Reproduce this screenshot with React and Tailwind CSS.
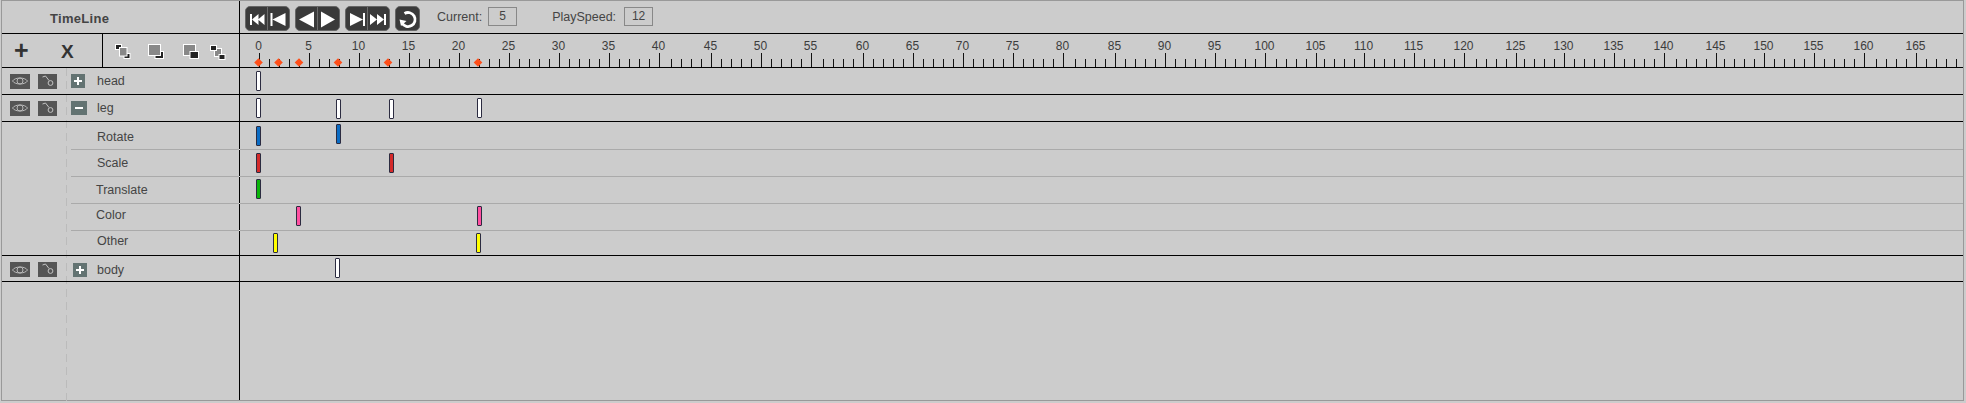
import React from 'react';

const MAJORS = {
  0: 259, 5: 309, 10: 359, 15: 409, 20: 459, 25: 509, 30: 559, 35: 609, 40: 659, 45: 711, 50: 761, 55: 811,
  60: 863, 65: 913, 70: 963, 75: 1013, 80: 1063, 85: 1115, 90: 1165, 95: 1215, 100: 1265, 105: 1316, 110: 1364,
  115: 1414, 120: 1464, 125: 1516, 130: 1564, 135: 1614, 140: 1664, 145: 1716, 150: 1764, 155: 1814, 160: 1864, 165: 1916,
};
const DIAMONDS = [258.5, 278.5, 299, 338, 388, 478];

const KEY_COLORS = {
  white: 'bg-white',
  blue: 'bg-[#0a6cc4]',
  red: 'bg-[#d42a2a]',
  green: 'bg-[#0ab50a]',
  pink: 'bg-[#ff4fa0]',
  yellow: 'bg-[#ffff00]',
};

const Ruler = () => {
  const majors = Object.keys(MAJORS).map(Number);
  const minors = [];
  majors.forEach((n) => {
    const x = MAJORS[n];
    if (n > 0) [10, 20, 30, 40].forEach((d) => minors.push(x - d));
  });
  [10, 20, 30, 40].forEach((d) => minors.push(1916 + d));
  return (
    <svg width="1723" height="33" viewBox="240 34 1723 33" className="block">
      {minors.map((x) => <line key={x} x1={x + 0.5} x2={x + 0.5} y1="59" y2="67" stroke="#111" />)}
      {majors.map((n) => (
        <g key={n}>
          <line x1={MAJORS[n] + 0.5} x2={MAJORS[n] + 0.5} y1="53" y2="67" stroke="#111" />
          <text x={MAJORS[n] - 0.5} y="50" textAnchor="middle" fontSize="12" fill="#3c3c3c">{n}</text>
        </g>
      ))}
      {DIAMONDS.map((x) => (
        <polygon key={x} points={`${x},58.2 ${x + 4.3},62.5 ${x},66.8 ${x - 4.3},62.5`} fill="#ff4f1a" />
      ))}
    </svg>
  );
};

const Keyframe = ({ x, y, color }) => (
  <div
    className={`absolute w-[5px] h-[20px] rounded-[1px] border border-[#2b2b40] ${KEY_COLORS[color]}`}
    style={{ left: x - 240, top: y }}
  />
);

const EyeIcon = () => (
  <div className="w-[20px] h-[15px] bg-[#555] flex items-center justify-center">
    <svg width="18" height="12" viewBox="0 0 18 12" fill="none" stroke="#b8b8b8" strokeWidth="1">
      <path d="M1.5 6 C4 2 14 2 16.5 6 C14 10 4 10 1.5 6 Z" />
      <circle cx="9" cy="6" r="3" />
    </svg>
  </div>
);

const KeyIcon = () => (
  <div className="w-[19px] h-[15px] bg-[#555] flex items-center justify-center">
    <svg width="19" height="15" viewBox="0 0 19 15" fill="none" stroke="#c4c4c4" strokeWidth="1">
      <path d="M4.5 3 L7.5 2 L11 6.5" />
      <circle cx="12.5" cy="9" r="2.4" />
    </svg>
  </div>
);

const Toggle = ({ minus, wide }) => (
  <div className={`h-[14px] bg-[#637372] flex items-center justify-center ${wide ? 'w-[16px]' : 'w-[14px]'}`}>
    <svg width="10" height="10" viewBox="0 0 10 10" fill="#fff">
      <rect x="1" y="4" width="8" height="2" />
      {!minus && <rect x="4" y="1" width="2" height="8" />}
    </svg>
  </div>
);

const Divider = () => <div className="w-px h-full bg-black shrink-0" />;

const ParentRow = ({ label, height, minus, wide, toggleGap, labelGap, keys, top = '', labelTop = '', border = 'border-b border-black' }) => (
  <div className={`flex ${height} ${border}`}>
    <div className={`w-[237px] pl-[8px] flex items-center shrink-0 ${top}`}>
      <EyeIcon />
      <div className="w-[8px]" />
      <KeyIcon />
      <div className={toggleGap} />
      <Toggle minus={minus} wide={wide} />
      <span className={`${labelGap} ${labelTop} text-[12.5px] leading-[15px] text-[#444]`}>{label}</span>
    </div>
    <Divider />
    <div className="relative flex-1">
      {keys.map((k) => <Keyframe key={k.x} {...k} />)}
    </div>
  </div>
);

const SubRow = ({ label, height, pad, indent, keys, black }) => {
  const line = black ? 'border-b border-black' : 'border-b border-[#aaa]';
  return (
    <div className={`flex ${height} ${black ? line : ''}`}>
      <div className="w-[237px] pl-[69px] shrink-0">
        <div className={`h-full ${black ? '' : line} ${pad} ${indent} text-[12.5px] leading-[15px] text-[#444]`}>{label}</div>
      </div>
      <div className={`w-px h-full bg-black shrink-0 ${black ? '' : 'border-b border-[#ddd]'}`} />
      <div className={`relative flex-1 ${black ? '' : line}`}>
        {keys.map((k) => <Keyframe key={k.x} {...k} />)}
      </div>
    </div>
  );
};

const Sep = () => <div className="w-px h-full bg-[#6a6a6a]" />;

const Ctrl = ({ children }) => (
  <svg width="20" height="22" viewBox="0 0 20 22" fill="#fff" className="block">{children}</svg>
);

const Group = ({ left, right }) => (
  <div className="flex h-[25px] w-[45px] rounded-[5px] bg-[#3a3a3a] border border-[#666] overflow-hidden">
    <div className="w-[22px] flex items-center justify-center">{left}</div>
    <Sep />
    <div className="w-[22px] flex items-center justify-center">{right}</div>
  </div>
);

const Toolbar = () => (
  <div className="flex items-center pl-[5px] pt-[5px] pb-[2px] h-full">
    <div className="flex gap-[5px]">
      <Group
        left={<Ctrl><path d="M3 6h2v11H3zM5 11.5l6.5-5.5v11zM11 11.5l6.5-5.5v11z" /></Ctrl>}
        right={<Ctrl><path d="M2.5 5h2v13h-2zM4.5 11.5L17.5 5v13z" /></Ctrl>}
      />
      <Group
        left={<Ctrl><path d="M2 11.5L17 3.5v16z" /></Ctrl>}
        right={<Ctrl><path d="M3 3.5L17 11.5L3 19.5z" /></Ctrl>}
      />
      <Group
        left={<Ctrl><path d="M3 5L16 11.5L3 18zM16 5h2v13h-2z" /></Ctrl>}
        right={<Ctrl><path d="M2 6l7 5.5l-7 5.5zM9 6l7 5.5l-7 5.5zM16 6h2v11h-2z" /></Ctrl>}
      />
      <div className="w-[25px] h-[25px] rounded-[5px] bg-[#3a3a3a] border border-[#666] flex items-center justify-center">
        <svg width="22" height="22" viewBox="0 0 22 22" fill="none" className="block">
          <path d="M7.5 5.5 A7 7 0 1 1 5 15" stroke="#fff" strokeWidth="2.8" />
          <path d="M2.5 11.5 L9.5 13 L4 18 Z" fill="#fff" />
        </svg>
      </div>
    </div>
    <div className="flex items-center ml-[17px] mb-[5px] text-[12.5px] text-[#444]">
      <span className="mt-[2px]">Current:</span>
      <div className="ml-[6px] w-[29px] h-[19px] border border-[#888] flex items-center justify-center text-[12px]">5</div>
      <span className="ml-[35px] mt-[2px]">PlaySpeed:</span>
      <div className="ml-[8px] w-[29px] h-[19px] border border-[#888] flex items-center justify-center text-[12px]">12</div>
    </div>
  </div>
);

const Stack = ({ children }) => (
  <svg width="18" height="18" viewBox="0 0 18 18" className="block" stroke="#fff" strokeWidth="1">{children}</svg>
);

const OrderIcons = () => (
  <div className="w-[134px] relative">
    <div className="absolute left-[11px] top-[9px]">
      <Stack>
        <rect x="1.5" y="1.5" width="6" height="5" fill="#222" />
        <rect x="10" y="10.5" width="6" height="5" fill="#222" />
        <rect x="5.5" y="4.5" width="7.5" height="8.5" fill="#888" />
      </Stack>
    </div>
    <div className="absolute left-[44px] top-[9px]">
      <Stack>
        <rect x="8" y="8.5" width="8.5" height="7" fill="#222" />
        <rect x="1.5" y="1.5" width="12" height="11" fill="#888" />
      </Stack>
    </div>
    <div className="absolute left-[79px] top-[9px]">
      <Stack>
        <rect x="1.5" y="1.5" width="12" height="11" fill="#888" />
        <rect x="8" y="8.5" width="8.5" height="7" fill="#222" />
      </Stack>
    </div>
    <div className="absolute left-[106px] top-[9px]">
      <Stack>
        <rect x="5.5" y="5.5" width="7" height="8" fill="#888" />
        <rect x="1.5" y="2.5" width="6" height="5" fill="#222" />
        <rect x="10" y="11.5" width="6" height="5" fill="#222" />
      </Stack>
    </div>
  </div>
);

export default function App() {
  return (
    <div className="w-full h-[403px] bg-[#ccc] overflow-hidden font-['Liberation_Sans',Arial,sans-serif]">
      <div className="relative h-[401px] ml-[1px] mr-[2px] border border-[#999]">
        <div className="absolute left-[64px] top-[67px] -bottom-[2px] w-px bg-[repeating-linear-gradient(to_bottom,#bbb_0,#bbb_8px,transparent_8px,transparent_13px)]" />

        <div className="relative flex h-[33px] border-b border-black">
          <div className="w-[237px] pl-[48px] pt-[3px] flex items-center shrink-0 text-[13px] font-bold tracking-[0.3px] text-[#444]">TimeLine</div>
          <Divider />
          <div className="flex-1"><Toolbar /></div>
        </div>

        <div className="relative flex h-[34px] border-b border-black">
          <div className="w-[100px] h-full flex items-center shrink-0 font-bold text-[#333]">
            <span className="w-[59px] pl-[12px] text-[25px] leading-none">+</span>
            <span className="text-[19px] leading-none mt-[2px]">X</span>
          </div>
          <Divider />
          <OrderIcons />
          <div className="w-[2px]" />
          <Divider />
          <div className="flex-1"><Ruler /></div>
        </div>

        <div className="relative">
          <ParentRow label="head" height="h-[27px]" toggleGap="w-[14px]" labelGap="ml-[12px]" keys={[{ x: 256, y: 3, color: 'white' }]} />
          <ParentRow
            label="leg" height="h-[27px]" minus wide toggleGap="w-[14px]" labelGap="ml-[10px]" labelTop="mt-[1px]"
            keys={[
              { x: 256, y: 3, color: 'white' }, { x: 336, y: 4, color: 'white' },
              { x: 389, y: 4, color: 'white' }, { x: 477, y: 3, color: 'white' },
            ]}
          />
          <SubRow label="Rotate" height="h-[28px]" pad="pt-[8px]" indent="pl-[26px]" keys={[{ x: 256, y: 4, color: 'blue' }, { x: 336, y: 2, color: 'blue' }]} />
          <SubRow label="Scale" height="h-[27px]" pad="pt-[6px]" indent="pl-[26px]" keys={[{ x: 256, y: 3, color: 'red' }, { x: 389, y: 3, color: 'red' }]} />
          <SubRow label="Translate" height="h-[27px]" pad="pt-[6px]" indent="pl-[25px]" keys={[{ x: 256, y: 2, color: 'green' }]} />
          <SubRow label="Color" height="h-[27px]" pad="pt-[4px]" indent="pl-[25px]" keys={[{ x: 296, y: 2, color: 'pink' }, { x: 477, y: 2, color: 'pink' }]} />
          <SubRow label="Other" height="h-[25px]" pad="pt-[3px]" indent="pl-[26px]" black keys={[{ x: 273, y: 2, color: 'yellow' }, { x: 476, y: 2, color: 'yellow' }]} />
          <ParentRow label="body" height="h-[26px]" top="pt-[2px]" toggleGap="w-[16px]" labelGap="ml-[10px]" labelTop="mt-[1px]" keys={[{ x: 335, y: 2, color: 'white' }]} />
        </div>

        <div className="relative flex h-[118px]">
          <div className="w-[237px] shrink-0" />
          <Divider />
        </div>
      </div>
    </div>
  );
}
